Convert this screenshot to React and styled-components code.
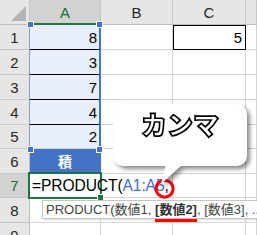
import React from "react";
import styled, { createGlobalStyle, css } from "styled-components";

const Global = createGlobalStyle`
  html, body { margin: 0; padding: 0; background: #fff; overflow: hidden; }
  body { width: 257px; height: 235px; font-family: "Liberation Sans", Arial, sans-serif; }
`;

const Sheet = styled.div`
  position: relative;
  width: 257px;
  height: 235px;
  overflow: hidden;
`;

const Grid = styled.div`
  display: grid;
  grid-template-columns: 30px 71px 72px 73px 1fr;
  grid-template-rows: 25px 25px 25px 25px 25px 24px 25px 24px 25px 25px;
`;

const Corner = styled.div`
  position: relative;
  background: #e6e6e6;
  border-right: 1px solid #c6c6c6;
  border-bottom: 1px solid #bcbcbc;
  box-sizing: border-box;
  &::after {
    content: "";
    position: absolute;
    right: 3px;
    bottom: 3px;
    width: 0;
    height: 0;
    border-left: 15px solid transparent;
    border-bottom: 15px solid #b4b4b4;
  }
`;

const ColHead = styled.div`
  box-sizing: border-box;
  display: flex;
  align-items: center;
  justify-content: center;
  background: ${(p) => (p.$active ? "#d2d2d2" : "#e6e6e6")};
  color: ${(p) => (p.$active ? "#1d6b40" : "#262626")};
  border-right: 1px solid #c8c8c8;
  border-bottom: ${(p) => (p.$active ? "2px solid #217346" : "1px solid #bcbcbc")};
  font-size: 15px;
  padding-top: ${(p) => (p.$active ? "1px" : "0")};
`;

const RowHead = styled.div`
  box-sizing: border-box;
  display: flex;
  align-items: center;
  justify-content: center;
  background: ${(p) => (p.$active ? "#d2d2d2" : "#e6e6e6")};
  color: ${(p) => (p.$active ? "#1d6b40" : "#262626")};
  border-right: 1px solid #bcbcbc;
  border-bottom: 1px solid #c8c8c8;
  font-size: 15px;
`;

const Cell = styled.div`
  box-sizing: border-box;
  position: relative;
  display: flex;
  align-items: center;
  justify-content: ${(p) => p.$align || "flex-end"};
  padding: 0 3px;
  font-size: 15px;
  color: #000;
  background: ${(p) => p.$bg || "#fff"};
  border-right: 1px solid ${(p) => p.$rightColor || "#d4d4d4"};
  border-bottom: 1px solid ${(p) => p.$bottomColor || "#d4d4d4"};
  ${(p) => (p.$boxed ? "outline: 1px solid #000; outline-offset: -1px;" : "")}
  ${(p) =>
    p.$header
      ? "color:#fff; font-weight:bold; font-family:'Noto Sans CJK JP', sans-serif; font-size:14px;"
      : ""}
`;

const FormulaText = styled.span`
  position: absolute;
  left: 2px;
  top: 50%;
  transform: translateY(-52%);
  white-space: nowrap;
  font-size: 15.6px;
  letter-spacing: -0.1px;
  color: #000;
  z-index: 3;
`;

const Ref = styled.span`
  color: #3d6fcc;
`;

const Comma = styled.span`
  position: relative;
  &::after {
    content: "";
    position: absolute;
    left: 50%;
    top: 50%;
    width: 14px;
    height: 14px;
    border: 3px solid #f00;
    border-radius: 50%;
    transform: translate(-62%, -30%);
  }
`;

const RangeBox = styled.div`
  position: absolute;
  left: 29px;
  top: 24px;
  width: 72px;
  height: 125px;
  box-sizing: border-box;
  border-left: 1px solid #7d9bd6;
  border-right: 2px solid #4472c4;
  pointer-events: none;
  z-index: 4;
`;

const corners = {
  tl: css`left: -3px; top: -3px;`,
  tr: css`right: -4px; top: -3px;`,
  bl: css`left: -3px; bottom: -4px;`,
  br: css`right: -4px; bottom: -4px;`,
};

const Handle = styled.div`
  position: absolute;
  width: 5px;
  height: 5px;
  background: ${(p) => p.$color || "#4472c4"};
  border: 1px solid #fff;
  ${(p) => corners[p.$at]}
`;

const ActiveBox = styled.div`
  position: absolute;
  left: 28px;
  top: 172px;
  width: 74px;
  height: 27px;
  box-sizing: border-box;
  border: 2px solid #217346;
  z-index: 2;
`;

const Tip = styled.div`
  position: absolute;
  left: 42px;
  top: 200px;
  width: 240px;
  height: 19px;
  box-sizing: border-box;
  border: 1px solid #c6c6c6;
  background: #fff;
  box-shadow: 1px 1px 2px rgba(0, 0, 0, 0.15);
  padding-left: 3px;
  font-size: 13px;
  line-height: 17px;
  color: #444;
  white-space: nowrap;
  font-family: "Liberation Sans", "Noto Sans CJK JP", sans-serif;
  z-index: 5;
`;

const BoldArg = styled.b`
  position: relative;
  color: #333;
  &::after {
    content: "";
    position: absolute;
    left: 0;
    right: 0;
    top: calc(100% + 2px);
    height: 3px;
    background: #f00;
  }
`;

const CalloutWrap = styled.div`
  position: absolute;
  left: 113px;
  top: 104px;
  width: 134px;
  height: 62px;
  filter: drop-shadow(3px 3px 2px rgba(0, 0, 0, 0.45));
  z-index: 6;
`;

const Bubble = styled.div`
  width: 100%;
  height: 100%;
  box-sizing: border-box;
  background: #fff;
  border-radius: 10px;
  display: flex;
  justify-content: center;
  align-items: flex-start;
  padding-top: 6px;
  font-family: "Noto Sans CJK JP", sans-serif;
  font-weight: 900;
  font-size: 26px;
  line-height: 1.1;
  color: #fff;
  -webkit-text-stroke: 1.7px #000;
`;

const Tail = styled.div`
  position: absolute;
  left: 48px;
  top: 60px;
  width: 22px;
  height: 20px;
  background: #fff;
  clip-path: polygon(5px 0, 22px 0, 0 100%);
`;

const rows = [
  { n: 1, a: "8", c: "5" },
  { n: 2, a: "3" },
  { n: 3, a: "7" },
  { n: 4, a: "4" },
  { n: 5, a: "2" },
  { n: 6, label: "積" },
  { n: 7, formula: true },
  { n: 8 },
  { n: 9 },
];

export default function App() {
  return (
    <>
      <Global />
      <Sheet>
        <Grid>
          <Corner />
          <ColHead $active>A</ColHead>
          <ColHead>B</ColHead>
          <ColHead>C</ColHead>
          <ColHead />
          {rows.map((r) => (
            <React.Fragment key={r.n}>
              <RowHead $active={r.n === 7}>{r.n}</RowHead>
              {r.label ? (
                <Cell $bg="#4472c4" $align="center" $header $rightColor="#4472c4">
                  {r.label}
                </Cell>
              ) : r.formula ? (
                <Cell>
                  <FormulaText>
                    =PRODUCT(<Ref>A1:A5</Ref>
                    <Comma>,</Comma>
                  </FormulaText>
                </Cell>
              ) : (
                <Cell
                  $bg={r.a ? "#e9eff9" : "#fff"}
                  $bottomColor={r.a && r.n < 5 ? "#000" : undefined}
                >
                  {r.a}
                </Cell>
              )}
              <Cell />
              <Cell $boxed={!!r.c}>{r.c}</Cell>
              <Cell />
            </React.Fragment>
          ))}
        </Grid>
        <RangeBox>
          <Handle $at="tl" />
          <Handle $at="tr" />
          <Handle $at="bl" />
          <Handle $at="br" />
        </RangeBox>
        <ActiveBox>
          <Handle $at="br" $color="#217346" />
        </ActiveBox>
        <Tip>
          PRODUCT(数値1, <BoldArg>[数値2]</BoldArg>, [数値3], ...)
        </Tip>
        <CalloutWrap>
          <Bubble>カンマ</Bubble>
          <Tail />
        </CalloutWrap>
      </Sheet>
    </>
  );
}
